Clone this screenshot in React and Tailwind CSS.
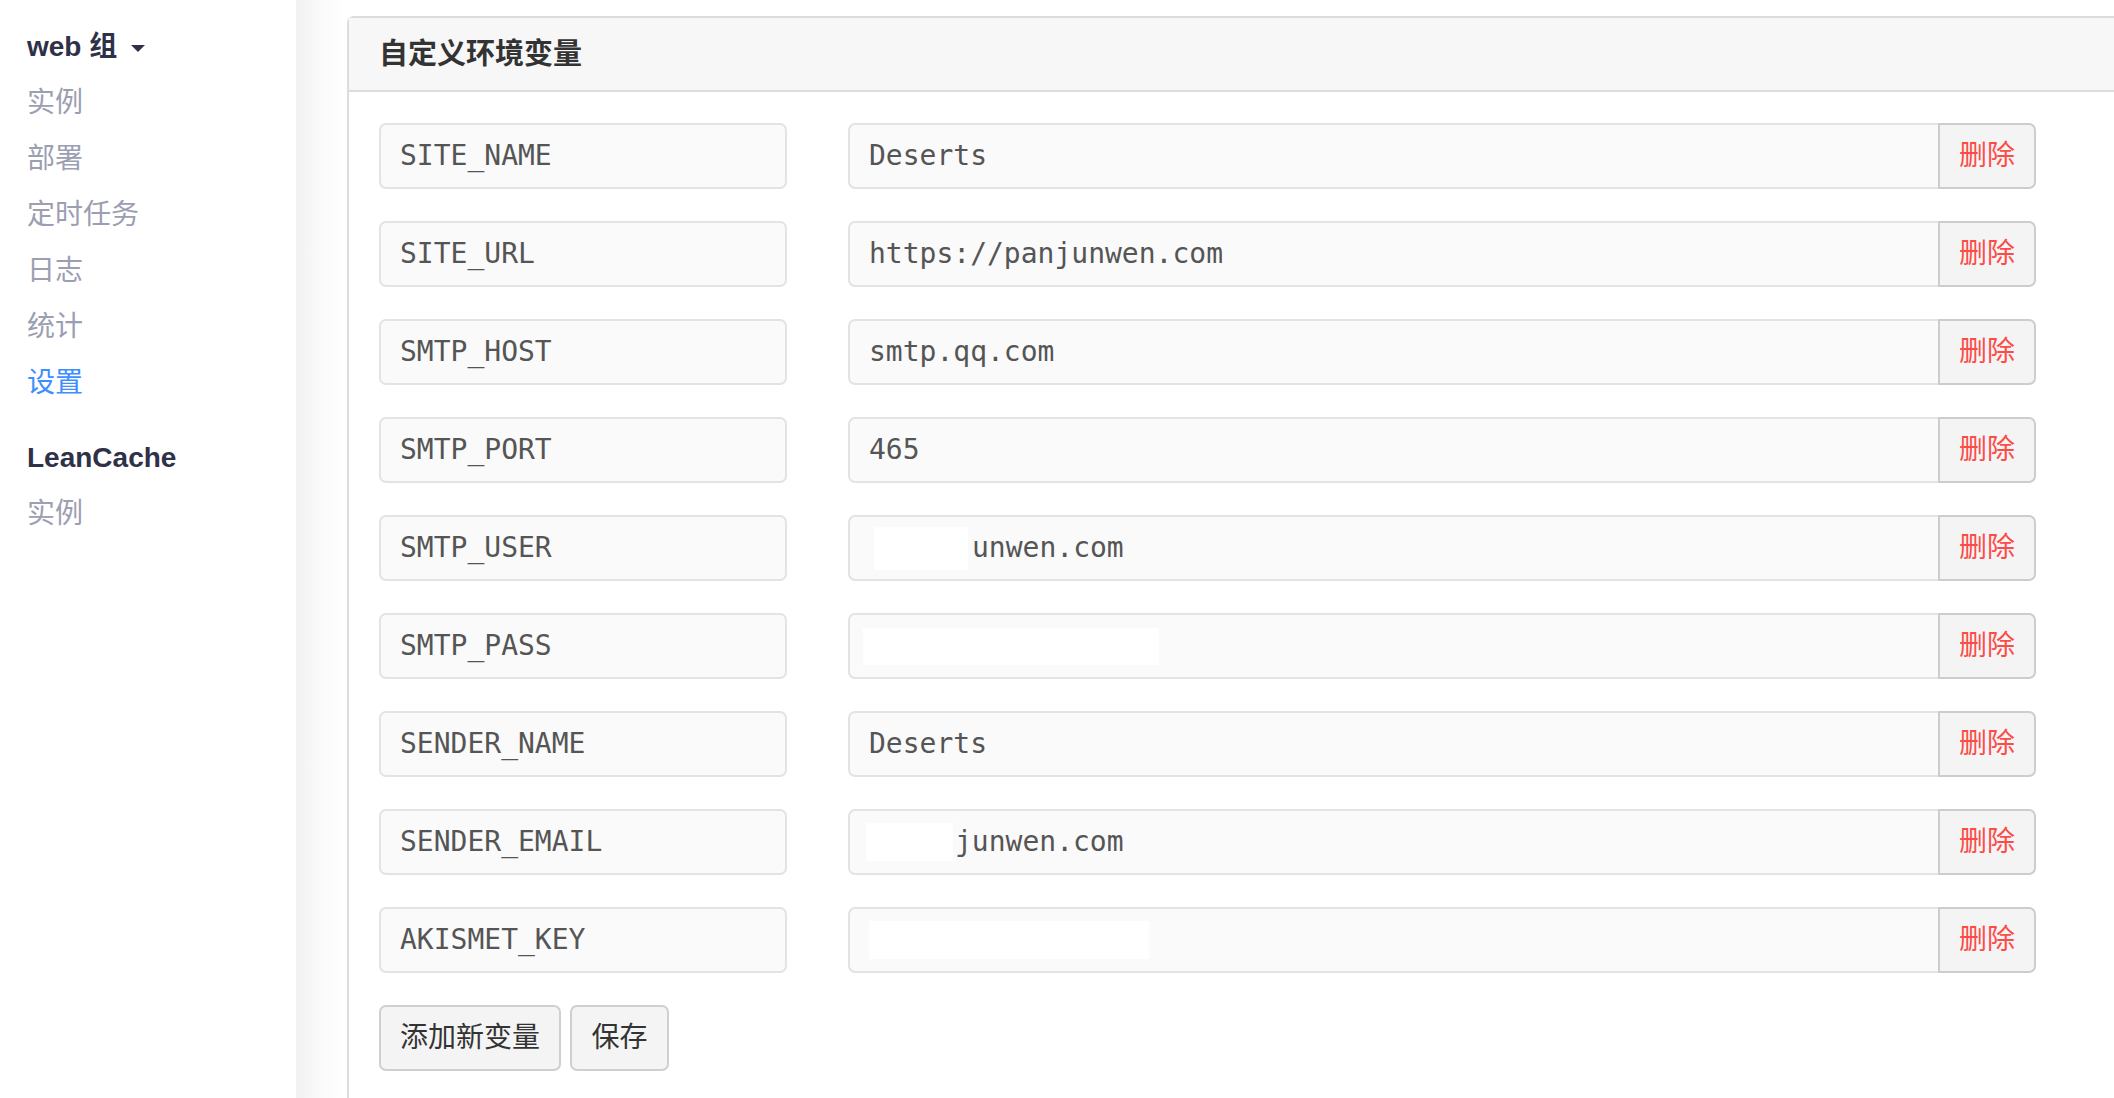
const vars = [
  { key: "SITE_NAME", value: "Deserts" },
  { key: "SITE_URL", value: "https://panjunwen.com" },
  { key: "SMTP_HOST", value: "smtp.qq.com" },
  { key: "SMTP_PORT", value: "465" },
  { key: "SMTP_USER", value: "unwen.com", mask: "user" },
  { key: "SMTP_PASS", value: "", mask: "pass" },
  { key: "SENDER_NAME", value: "Deserts" },
  { key: "SENDER_EMAIL", value: "junwen.com", mask: "email" },
  { key: "AKISMET_KEY", value: "", mask: "key" },
];

const menu = ["实例", "部署", "定时任务", "日志", "统计", "设置"];

const mono = "font-['DejaVu_Sans_Mono','Liberation_Mono',monospace]";
const cjk = "font-['Liberation_Sans','Noto_Sans_CJK_SC',sans-serif]";

const ValueText = ({ item }) => {
  // masked parts are white blocks in the screenshot
  if (item.mask === "user") {
    return (
      <span className="flex items-center">
        <span className="ml-[5px] mr-[4px] h-[43px] w-[94px] bg-white" />
        {item.value}
      </span>
    );
  }
  if (item.mask === "email") {
    return (
      <span className="flex items-center">
        <span className="-ml-[3px] mr-[2px] h-[38px] w-[87px] bg-white" />
        {item.value}
      </span>
    );
  }
  if (item.mask === "pass") {
    return <span className="-ml-[6px] h-[37px] w-[296px] bg-white" />;
  }
  if (item.mask === "key") {
    return <span className="h-[38px] w-[280px] bg-white" />;
  }
  return <span>{item.value}</span>;
};

const App = () => {
  return (
    <div className={`flex h-[1098px] w-[2114px] overflow-hidden bg-white ${cjk}`}>
      {/* Sidebar */}
      <div className="w-[296px] shrink-0 bg-white pl-[27px] pt-[19px]">
        <div className="flex h-[56px] items-center text-[28px] font-bold text-[#2e3148]">
          web 组
          <span className="ml-[14px] mt-[2px] h-0 w-0 border-l-[7px] border-r-[7px] border-t-[7px] border-l-transparent border-r-transparent border-t-[#2e3148]" />
        </div>
        {menu.map((m) => (
          <div
            key={m}
            className={`flex h-[56px] items-center text-[28px] ${
              m === "设置" ? "text-[#3d8eff]" : "text-[#9c9eb2]"
            }`}
          >
            {m}
          </div>
        ))}
        <div className="mt-[19px] flex h-[56px] items-center text-[28px] font-bold text-[#2e3148]">
          LeanCache
        </div>
        <div className="flex h-[56px] items-center text-[28px] text-[#9c9eb2]">实例</div>
      </div>

      {/* sidebar shadow */}
      <div className="w-[51px] shrink-0 bg-gradient-to-r from-[#f1f1f1] via-[#fbfbfb] to-white" />

      {/* Panel */}
      <div className="mt-[16px] w-[1900px] shrink-0 rounded-tl-[7px] border-l-2 border-t-2 border-[#dcdcdc]">
        <div className="flex h-[74px] items-center border-b-2 border-[#dcdcdc] bg-[#f7f7f7] pl-[30px] pt-[2px] text-[29px] font-bold text-[#333]">
          自定义环境变量
        </div>
        <div className="flex flex-col gap-[32px] pl-[30px] pt-[31px]">
          {vars.map((v) => (
            <div key={v.key} className={`flex h-[66px] text-[28px] text-[#555] ${mono}`}>
              <div className="flex w-[408px] items-center rounded-[7px] border-2 border-[#e3e3e3] bg-[#fafafa] pl-[19px]">
                {v.key}
              </div>
              <div className="ml-[61px] flex w-[1090px] items-center rounded-l-[7px] border-2 border-r-0 border-[#e3e3e3] bg-[#fafafa] pl-[19px]">
                <ValueText item={v} />
              </div>
              <button
                className={`flex w-[98px] items-center justify-center rounded-r-[7px] border-2 border-[#cdcdcd] bg-[#f4f4f4] text-[28px] text-[#fb4c47] ${cjk}`}
              >
                删除
              </button>
            </div>
          ))}
          <div className="flex gap-[9px]">
            <button className="h-[66px] w-[182px] rounded-[7px] border-2 border-[#cfcfcf] bg-[#f4f4f4] text-[28px] text-[#333]">
              添加新变量
            </button>
            <button className="h-[66px] w-[99px] rounded-[7px] border-2 border-[#cfcfcf] bg-[#f4f4f4] text-[28px] text-[#333]">
              保存
            </button>
          </div>
        </div>
      </div>
    </div>
  );
};

export default App;
